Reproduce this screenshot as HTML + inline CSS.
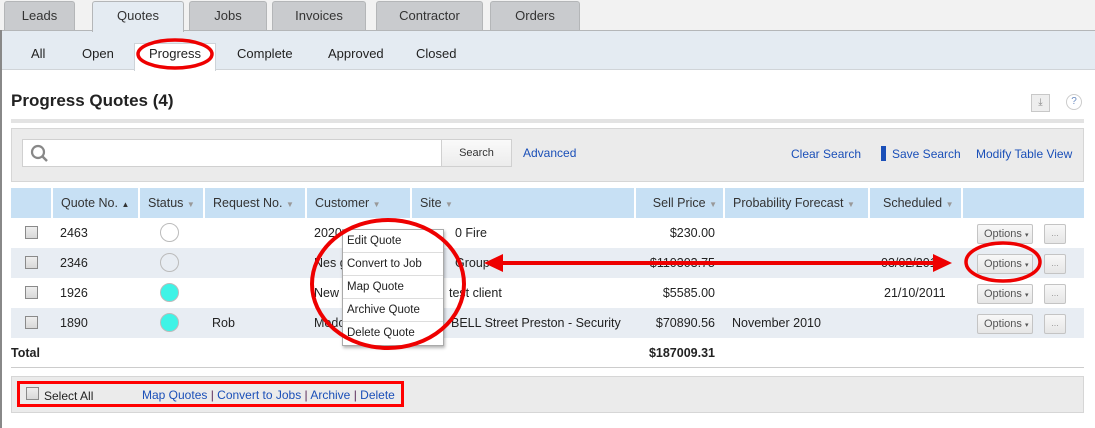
<!DOCTYPE html>
<html><head><style>
*{margin:0;padding:0;box-sizing:border-box}
body{width:1095px;height:428px;position:relative;background:#fff;font-family:"Liberation Sans",Arial,sans-serif;font-size:12px;color:#222;overflow:hidden}
.a{position:absolute}
.tab{position:absolute;top:1px;height:29px;background:#c9cbce;border:1px solid #b4b6b8;border-bottom:none;border-radius:3px 3px 0 0;text-align:center;line-height:28px;font-size:13px;color:#333}
.sub{position:absolute;top:46px;font-size:13px;color:#222}
.th{position:absolute;top:188px;height:30px;line-height:30px;font-size:12.5px;color:#333;border-left:2px solid #fff;padding-left:8px}
.row{position:absolute;left:11px;width:1073px;height:30px}
.cell{position:absolute;line-height:30px;font-size:12.5px;color:#222}
.cb{position:absolute;left:14px;width:13px;height:13px;border:1px solid #8a8a8a;background:linear-gradient(#eee,#d8d8d8)}
.dot{position:absolute;left:149px;width:19px;height:19px;border-radius:50%;border:1px solid #bbb}
.opt{position:absolute;left:966px;width:56px;height:20px;border:1px solid #c4c4c4;border-radius:2px;background:linear-gradient(#f8f8f8,#e6e6e6);font-size:11px;color:#555;line-height:18px;padding-left:6px}
.dd{position:absolute;left:1033px;width:22px;height:20px;border:1px solid #c4c4c4;border-radius:2px;background:linear-gradient(#f8f8f8,#e6e6e6);font-size:9px;color:#999;text-align:center;line-height:16px}
.lnk{color:#1a4fb8}
.mi{height:23px;line-height:22px;padding-left:4px;font-size:11.5px;border-bottom:1px solid #ddd}
</style></head><body>
<div class="a" style="left:0;top:0;width:1095px;height:30px;background:#f2f2f2"></div>
<div class="tab" style="left:4px;width:71px">Leads</div>
<div class="tab" style="left:92px;width:92px;background:#e4ebf2;height:31px;z-index:2">Quotes</div>
<div class="tab" style="left:189px;width:78px">Jobs</div>
<div class="tab" style="left:272px;width:94px">Invoices</div>
<div class="tab" style="left:376px;width:107px">Contractor</div>
<div class="tab" style="left:490px;width:90px">Orders</div>
<div class="a" style="left:0;top:30px;width:1095px;height:40px;background:#e4ebf2;border-top:1px solid #b4b6b8;border-bottom:1px solid #d0d4d8"></div>
<div class="a" style="left:134px;top:43px;width:82px;height:28px;background:#fff;border:1px solid #cdd3d8;border-bottom:none"></div>
<div class="sub" style="left:31px">All</div>
<div class="sub" style="left:82px">Open</div>
<div class="sub" style="left:149px">Progress</div>
<div class="sub" style="left:237px">Complete</div>
<div class="sub" style="left:328px">Approved</div>
<div class="sub" style="left:416px">Closed</div>
<div class="a" style="left:0;top:30px;width:2px;height:398px;background:#888"></div>
<div class="a" style="left:11px;top:91px;font-size:17px;font-weight:bold;color:#222">Progress Quotes (4)</div>
<div class="a" style="left:1031px;top:94px;width:19px;height:18px;border:1px solid #c8c8c8;background:#eee;font-size:10px;color:#888;text-align:center;line-height:16px">⤓</div>
<div class="a" style="left:1066px;top:94px;width:16px;height:16px;border:1px solid #ccc;border-radius:50%;font-size:10px;color:#6a8bc0;text-align:center;line-height:14px">?</div>
<div class="a" style="left:11px;top:119px;width:1073px;height:4px;background:#e3e3e3"></div>
<div class="a" style="left:11px;top:128px;width:1073px;height:54px;background:#ebebeb;border:1px solid #d6d6d6"></div>
<div class="a" style="left:22px;top:139px;width:420px;height:28px;background:#fff;border:1px solid #d0d0d0"></div>
<svg class="a" style="left:30px;top:144px" width="20" height="20"><circle cx="8" cy="8" r="6" fill="none" stroke="#888" stroke-width="2.2"/><line x1="12" y1="12" x2="17" y2="17" stroke="#888" stroke-width="2.5"/></svg>
<div class="a" style="left:441px;top:139px;width:71px;height:28px;background:linear-gradient(#fafafa,#ececec);border:1px solid #d0d0d0;font-size:11px;text-align:center;line-height:26px;color:#333">Search</div>
<div class="a lnk" style="left:523px;top:146px;font-size:12px">Advanced</div>
<div class="a lnk" style="left:791px;top:147px;font-size:12px">Clear Search</div>
<div class="a" style="left:881px;top:146px;width:5px;height:15px;background:#1a4fb8"></div>
<div class="a lnk" style="left:892px;top:147px;font-size:12px">Save Search</div>
<div class="a lnk" style="left:976px;top:147px;font-size:12px">Modify Table View</div>
<div class="a" style="left:11px;top:188px;width:1073px;height:30px;background:#c7e0f4"></div>
<div class="th" style="left:51px;width:87px">Quote No. <span style="font-size:8px">▲</span></div>
<div class="th" style="left:138px;width:65px">Status <span style="font-size:8px;color:#999">▼</span></div>
<div class="th" style="left:203px;width:102px">Request No. <span style="font-size:8px;color:#999">▼</span></div>
<div class="th" style="left:305px;width:105px">Customer <span style="font-size:8px;color:#999">▼</span></div>
<div class="th" style="left:410px;width:224px">Site <span style="font-size:8px;color:#999">▼</span></div>
<div class="th" style="left:634px;width:89px;text-align:right;padding-right:6px">Sell Price <span style="font-size:8px;color:#999">▼</span></div>
<div class="th" style="left:723px;width:145px">Probability Forecast <span style="font-size:8px;color:#999">▼</span></div>
<div class="th" style="left:868px;width:93px;padding-left:13px">Scheduled <span style="font-size:8px;color:#999">▼</span></div>
<div class="th" style="left:961px;width:123px"></div>

<div class="row" style="top:218px;background:#fff">
<div class="cb" style="top:8px"></div><div class="cell" style="left:49px">2463</div><div class="dot" style="top:5px;background:#fff"></div>
<div class="cell" style="left:303px">2020</div><div class="cell" style="left:444px">0 Fire</div>
<div class="cell" style="left:620px;width:84px;text-align:right">$230.00</div>
<div class="opt" style="top:6px">Options <span style="font-size:7px">▾</span></div><div class="dd" style="top:6px">...</div></div>
<div class="row" style="top:248px;background:#e8edf3">
<div class="cb" style="top:8px"></div><div class="cell" style="left:49px">2346</div><div class="dot" style="top:5px;background:#e8edf3"></div>
<div class="cell" style="left:303px">Nes g</div><div class="cell" style="left:444px">Group</div>
<div class="cell" style="left:620px;width:84px;text-align:right">$110303.75</div>
<div class="cell" style="left:870px">03/02/2011</div>
<div class="opt" style="top:6px">Options <span style="font-size:7px">▾</span></div><div class="dd" style="top:6px">...</div></div>
<div class="row" style="top:278px;background:#fff">
<div class="cb" style="top:8px"></div><div class="cell" style="left:49px">1926</div><div class="dot" style="top:5px;background:#3ff3e6"></div>
<div class="cell" style="left:303px">New</div><div class="cell" style="left:438px">test client</div>
<div class="cell" style="left:620px;width:84px;text-align:right">$5585.00</div>
<div class="cell" style="left:873px">21/10/2011</div>
<div class="opt" style="top:6px">Options <span style="font-size:7px">▾</span></div><div class="dd" style="top:6px">...</div></div>
<div class="row" style="top:308px;background:#e8edf3">
<div class="cb" style="top:8px"></div><div class="cell" style="left:49px">1890</div><div class="dot" style="top:5px;background:#3ff3e6"></div>
<div class="cell" style="left:201px">Rob</div><div class="cell" style="left:303px">Medc</div><div class="cell" style="left:440px">BELL Street Preston - Security</div>
<div class="cell" style="left:620px;width:84px;text-align:right">$70890.56</div>
<div class="cell" style="left:721px">November 2010</div>
<div class="opt" style="top:6px">Options <span style="font-size:7px">▾</span></div><div class="dd" style="top:6px">...</div></div>
<div class="row" style="top:338px;background:#fff;border-bottom:1px solid #ccc">
<div class="cell" style="left:0px;font-weight:bold">Total</div>
<div class="cell" style="left:620px;width:84px;text-align:right;font-weight:bold">$187009.31</div></div>

<div class="a" style="left:342px;top:229px;width:102px;height:117px;background:#fff;border:1px solid #aaa;box-shadow:1px 2px 3px rgba(0,0,0,.3)">
<div class="mi">Edit Quote</div><div class="mi">Convert to Job</div><div class="mi">Map Quote</div><div class="mi">Archive Quote</div><div class="mi" style="border:none">Delete Quote</div></div>

<div class="a" style="left:11px;top:376px;width:1073px;height:37px;background:#ebebeb;border:1px solid #d6d6d6"></div>
<div class="a" style="left:17px;top:381px;width:387px;height:26px;border:3px solid #f00"></div>
<div class="cb" style="left:26px;top:387px"></div>
<div class="a" style="left:44px;top:389px;font-size:12px">Select All</div>
<div class="a" style="left:142px;top:388px;font-size:12px;color:#5a2a5a"><span class="lnk">Map Quotes</span> | <span class="lnk">Convert to Jobs</span> | <span class="lnk">Archive</span> | <span class="lnk">Delete</span></div>

<svg class="a" style="left:0;top:0" width="1095" height="428">
<ellipse cx="175" cy="54" rx="37" ry="14" fill="none" stroke="#e00" stroke-width="3.5"/>
<ellipse cx="388" cy="284" rx="76" ry="64" fill="none" stroke="#e00" stroke-width="4"/>
<ellipse cx="1003" cy="262" rx="37" ry="19" fill="none" stroke="#e00" stroke-width="3.5"/>
<line x1="500" y1="263" x2="935" y2="263" stroke="#e00" stroke-width="4"/>
<polygon points="484,263 503,254 503,272" fill="#e00"/>
<polygon points="952,263 933,254 933,272" fill="#e00"/>
</svg>
</body></html>
